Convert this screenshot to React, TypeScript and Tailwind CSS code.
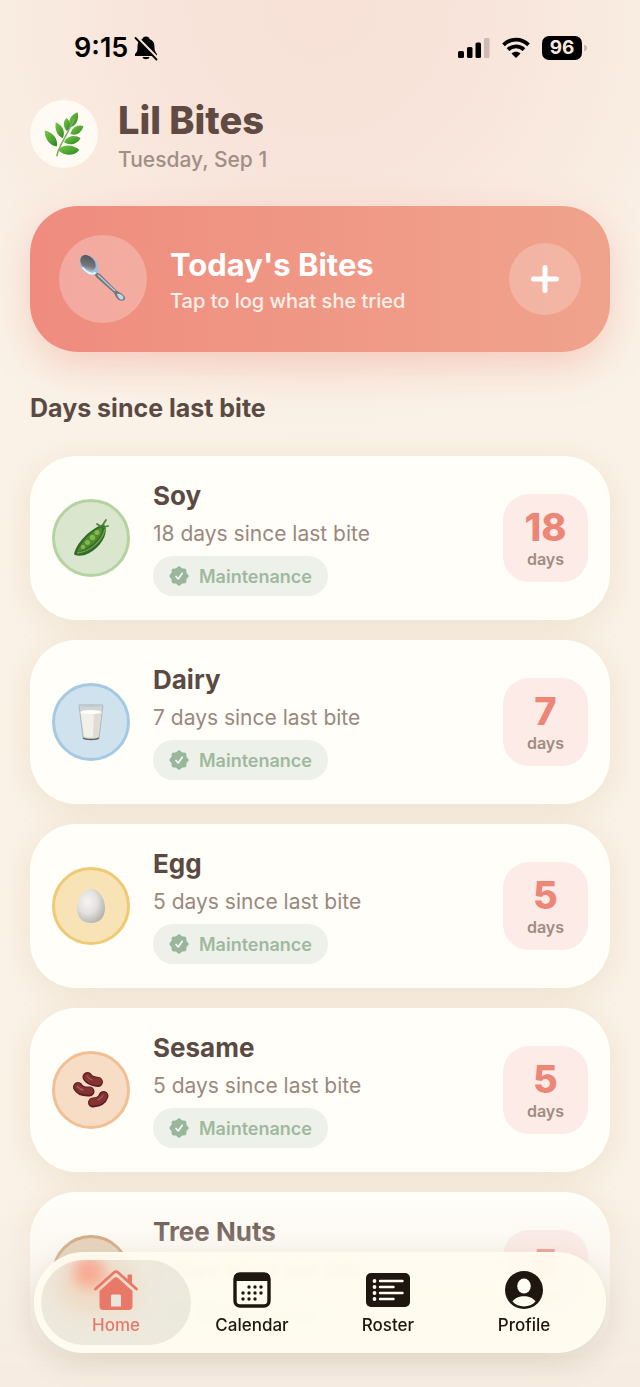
import type { ReactNode } from 'react';

interface Food {
  name: string;
  days: number;
  ring: string;
  icon: ReactNode;
}

function HerbIcon() {
  const leaves = [
    'M54 66C42 65 34 55 33 39C47 42 56 52 54 66Z',
    'M64 52C54 48 50 37 52 25C63 30 69 40 64 52Z',
    'M71 40C64 33 64 24 70 18C78 24 79 34 71 40Z',
    'M77 34C72 24 76 13 89 8C92 20 87 30 77 34Z',
    'M77 45C79 34 90 28 99 32C95 44 86 49 77 45Z',
    'M66 59C70 48 85 45 94 52C88 63 75 65 66 59Z',
    'M56 72C65 61 83 63 92 72C83 83 67 83 56 72Z',
  ];
  return (
    <svg viewBox="32 6 68 78" className="h-[46px] w-[42px]" aria-hidden="true">
      <defs>
        <linearGradient id="leaf" x1="0" y1="0" x2="1" y2="1">
          <stop offset="0" stopColor="#78cc45" />
          <stop offset="1" stopColor="#2f8527" />
        </linearGradient>
      </defs>
      {leaves.map(d => (
        <path key={d} d={d} fill="url(#leaf)" />
      ))}
      <path d="M54 82C56 66 69 52 83 20" fill="none" stroke="#7fae5e" strokeWidth="2.6" strokeLinecap="round" />
    </svg>
  );
}

function SpoonIcon() {
  return (
    <svg viewBox="0 0 48 48" className="size-12" aria-hidden="true">
      <defs>
        <linearGradient id="steel" x1="0" y1="0" x2="1" y2="1">
          <stop offset="0" stopColor="#4a4b50" />
          <stop offset="0.65" stopColor="#77797f" />
          <stop offset="1" stopColor="#c9e2f3" />
        </linearGradient>
      </defs>
      <path d="M14 16L21 19L38 36C42 38 47 41 46 44C44 47 39 46 37 42L35 38L17 22Z" fill="#74777e" />
      <path d="M19 20L36 36" stroke="#b9d0e0" strokeWidth="1.2" />
      <path d="M38 39C42 38 46 42 44 44C42 46 39 43 38 39Z" fill="#bed7ee" />
      <ellipse cx="10" cy="10" rx="11.500" ry="8" transform="rotate(50 10 10)" fill="#9dc0dc" />
      <ellipse cx="9" cy="8" rx="9" ry="6.500" transform="rotate(48 9 8)" fill="url(#steel)" />
      <path d="M4 13C7 17 12 20 16 18" fill="none" stroke="#e6f3fb" strokeWidth="2" strokeLinecap="round" />
    </svg>
  );
}

function PeaIcon() {
  return (
    <svg viewBox="0 0 36 38" className="h-[38px] w-9" aria-hidden="true">
      <path d="M1 35C3 25 16 10 31 5C37 14 27 30 12 36C7 37 2 37 1 35Z" fill="#33692a" />
      <path d="M4 33C8 23 18 12 29 8C31 16 19 29 4 33Z" fill="#4f8a33" />
      <g fill="#83b948">
        <circle cx="10" cy="28" r="2.200" />
        <circle cx="14.500" cy="23.500" r="2.500" />
        <circle cx="19.500" cy="18.500" r="2.700" />
        <circle cx="24" cy="13.500" r="2.500" />
      </g>
      <path d="M4 34C16 33 29 23 32 10" fill="none" stroke="#65a043" strokeWidth="1.600" />
      <path d="M27 7L24 5M29 7L33 1M31 8L35 7" stroke="#4f8636" strokeWidth="1.800" strokeLinecap="round" />
    </svg>
  );
}

function MilkIcon() {
  return (
    <svg viewBox="0 0 28 38" className="h-[38px] w-7" aria-hidden="true">
      <path d="M2 2L6 35C7 37 21 37 22 35L26 2Z" fill="#cfd6d8" stroke="#a7afb2" strokeWidth="0.800" />
      <path d="M3.500 9L7 33C9 35 19 35 21 33L24.500 9Z" fill="#f3efe9" />
      <path d="M17 10L16 34C18 34 20 34 21 33L24.500 9Z" fill="#e0dbd3" />
      <ellipse cx="14" cy="9" rx="10.500" ry="2" fill="#fffdf8" />
      <ellipse cx="14" cy="2.500" rx="12" ry="1.500" fill="#bfc8cb" />
      <path d="M6 35C9 37 19 37 22 35" fill="none" stroke="#5d6164" strokeWidth="1.400" />
    </svg>
  );
}

function EggIcon() {
  return (
    <svg viewBox="0 0 30 38" className="h-[38px] w-[30px]" aria-hidden="true">
      <defs>
        <radialGradient id="egg" cx="0.38" cy="0.38" r="0.7">
          <stop offset="0" stopColor="#f6f5f4" />
          <stop offset="0.5" stopColor="#e2e1df" />
          <stop offset="1" stopColor="#b1aeaa" />
        </radialGradient>
      </defs>
      <path d="M15 2C22 2 29 11 29 21C29 31 23 36 15 36C7 36 1 31 1 21C1 11 8 2 15 2Z" fill="url(#egg)" />
    </svg>
  );
}

function BeansIcon() {
  return (
    <svg viewBox="0 0 38 38" className="size-[38px]" aria-hidden="true">
      <g fill="none" strokeLinecap="round" strokeLinejoin="round">
        <g stroke="#5c1c20" strokeWidth="10">
          <path d="M15.500 6Q17.500 10 26 11" />
          <path d="M6 16Q8.500 21 17.500 20.500" />
          <path d="M31.500 25Q29.500 31 21 31.500" />
        </g>
        <g stroke="#843232" strokeWidth="7.500">
          <path d="M15.500 6Q17.500 10 26 10.500" />
          <path d="M6 16Q8.500 20.500 17.500 20" />
          <path d="M31.500 25Q29.500 30.500 21 31" />
        </g>
        <g stroke="#a9605c" strokeWidth="1.300">
          <path d="M15 5Q17 8 20 9" />
          <path d="M5.500 15.500Q8 18.500 11 19" />
          <path d="M31 24.500Q29 27.500 26 29" />
        </g>
      </g>
    </svg>
  );
}

function ChestnutIcon() {
  return (
    <svg viewBox="0 0 36 38" className="h-[38px] w-9" aria-hidden="true">
      <path d="M18 3C22 8 34 10 34 22C34 32 26 35 18 35C10 35 2 32 2 22C2 10 14 8 18 3Z" fill="#e0593f" />
      <path d="M4 26C10 22 26 22 32 26C30 33 24 35 18 35C12 35 6 33 4 26Z" fill="#e9a27c" />
    </svg>
  );
}

function VerifiedIcon() {
  return (
    <svg viewBox="0 0 20 20" className="size-5" aria-hidden="true">
      <g fill="#9ab69c">
        <rect x="2.600" y="2.600" width="14.800" height="14.800" rx="2.200" />
        <rect x="2.600" y="2.600" width="14.800" height="14.800" rx="2.200" transform="rotate(45 10 10)" />
      </g>
      <path d="M7 10.500L9.200 13L13.200 7.300" fill="none" stroke="#f4f7f0" strokeWidth="1.700" strokeLinecap="round" strokeLinejoin="round" />
    </svg>
  );
}

function StatusBar() {
  return (
    <div className="flex h-24 items-center justify-between pr-[53px] pl-[74px] text-black">
      <div className="flex items-center gap-1.5">
        <span className="text-[27px] leading-8 font-semibold">9:15</span>
        <svg viewBox="0 0 24 26" className="h-[26px] w-6" aria-label="Silent mode">
          <path d="M12 1.500C14 1.500 15.500 2.500 15.500 4C19.500 5.500 20.500 8.500 20.500 12C20.500 16 21.500 17 23 19V21H1V19C3 17 3.500 16 3.500 12C3.500 8.500 4.500 5.500 8.500 4C8.500 2.500 10 1.500 12 1.500Z" />
          <path d="M8.500 22H15.500C15 25 9 25 8.500 22Z" />
          <path d="M2 1.500L24.500 24" stroke="#f9e5da" strokeWidth="3" />
          <path d="M1.500 3L22.500 24.500" stroke="#000" strokeWidth="1.800" strokeLinecap="round" />
        </svg>
      </div>
      <div className="flex items-center gap-3">
        <svg viewBox="0 0 32 22" className="h-[22px] w-8" aria-label="Signal">
          <rect x="0" y="14" width="6" height="7" rx="1.500" />
          <rect x="9" y="10" width="5.500" height="11" rx="1.500" />
          <rect x="17.500" y="5.500" width="5.500" height="15.500" rx="1.500" />
          <rect x="26" y="1" width="5.500" height="20" rx="1.500" fill="#cdbab3" />
        </svg>
        <svg viewBox="0 0 28 22" className="h-[22px] w-7" aria-label="Wi-Fi">
          <g fill="none" stroke="#000" strokeWidth="3.800">
            <path d="M1.500 7.800C8.500 0.800 19.500 0.800 26.500 7.800" />
            <path d="M6 12.600C10.500 8.300 17.500 8.300 22 12.600" />
          </g>
          <path d="M9.500 16.500C12 14 16 14 18.500 16.500L14 21Z" />
        </svg>
        <div className="flex items-center gap-0.5">
          <span className="flex h-6 w-10 items-center justify-center rounded-[7px] bg-black text-[19px] font-bold text-[#f9e8de]">
            96
          </span>
          <span className="h-1.5 w-[3px] rounded-r-full bg-[#cdbab3]" />
        </div>
      </div>
    </div>
  );
}

function FoodCard({ name, days, ring, icon }: Food) {
  return (
    <li className="flex h-[164px] items-center rounded-[46px] bg-[#fffef9] px-[22px] shadow-[0_6px_32px_rgba(196,160,110,0.2)]">
      <div className={`flex size-[78px] shrink-0 items-center justify-center rounded-full border-[3px] ${ring}`}>
        {icon}
      </div>
      <div className="ml-[23px] flex flex-1 flex-col items-start">
        <h3 className="text-[26px] leading-8 font-bold text-[#5b4a43]">{name}</h3>
        <p className="mt-2 text-[21px] leading-7 text-[#9a887e]">{days} days since last bite</p>
        <span className="mt-2 flex h-10 items-center gap-2.5 rounded-full bg-[#eef1e9] px-4 text-[18px] font-semibold text-[#9fb99f]">
          <VerifiedIcon />
          Maintenance
        </span>
      </div>
      <div className="flex h-[88px] w-[85px] shrink-0 flex-col items-center justify-center rounded-[26px] bg-[#fdebe7] pt-1">
        <span className="text-[38px] leading-9 font-extrabold text-[#ec8677]">{days}</span>
        <span className="mt-0.5 text-base font-semibold text-[#a08c83]">days</span>
      </div>
    </li>
  );
}

const FOODS: Food[] = [
  { name: 'Soy', days: 18, ring: 'border-[#b4d3a0] bg-[#dae6ce]', icon: <PeaIcon /> },
  { name: 'Dairy', days: 7, ring: 'border-[#a4cae3] bg-[#d0e2ed]', icon: <MilkIcon /> },
  { name: 'Egg', days: 5, ring: 'border-[#efca72] bg-[#f7e3b5]', icon: <EggIcon /> },
  { name: 'Sesame', days: 5, ring: 'border-[#f0bf94] bg-[#f8ddc6]', icon: <BeansIcon /> },
  { name: 'Tree Nuts', days: 5, ring: 'border-[#c99a6b] bg-[#e3cbb0]', icon: <ChestnutIcon /> },
];

function HomeIcon() {
  return (
    <svg viewBox="0 0 46 42" className="h-[42px] w-[46px]" aria-hidden="true">
      <path d="M34.500 6.500Q34.500 5.500 35.500 5.500H38Q39 5.500 39 6.500V17L34.500 13Z" fill="currentColor" />
      <path d="M2.500 20L21 3.500Q23 1.800 25 3.500L43.500 20" fill="none" stroke="currentColor" strokeWidth="2.800" strokeLinecap="round" strokeLinejoin="round" />
      <path d="M21.500 8.500Q23 7.300 24.500 8.500L39.500 22V37Q39.500 41 35.500 41H10.500Q6.500 41 6.500 37V22Z" fill="currentColor" />
      <path d="M18 27Q18 25.500 19.500 25.500H26.500Q28 25.500 28 27V37.500H18Z" fill="#eae6da" />
    </svg>
  );
}

function CalendarIcon() {
  const dots = [[15, 14], [21, 14], [27, 14], [9, 20], [15, 20], [21, 20], [27, 20], [9, 26], [15, 26], [21, 26]];
  return (
    <svg viewBox="0 0 38 36" className="h-9 w-[38px]" aria-hidden="true">
      <rect x="2" y="2" width="34" height="32" rx="5" fill="none" stroke="currentColor" strokeWidth="3.400" />
      <path d="M1 9V6Q1 1 6 1H32Q37 1 37 6V9Z" fill="currentColor" />
      {dots.map(([x, y]) => (
        <circle key={`${x}-${y}`} cx={x + 1} cy={y + 1} r="1.700" fill="currentColor" />
      ))}
    </svg>
  );
}

function RosterIcon() {
  return (
    <svg viewBox="0 0 44 36" className="h-9 w-11" aria-hidden="true">
      <rect x="0" y="1" width="44" height="34" rx="5" fill="currentColor" />
      <g fill="#fffcf2">
        <circle cx="8.500" cy="9" r="1.900" />
        <circle cx="8.500" cy="15" r="1.900" />
        <circle cx="8.500" cy="21" r="1.900" />
        <circle cx="8.500" cy="27" r="1.900" />
      </g>
      <path d="M14 9H36.500M14 15H27.500M14 21H36.500M14 27H27.500" stroke="#fffcf2" strokeWidth="2.400" strokeLinecap="round" />
    </svg>
  );
}

function ProfileIcon() {
  return (
    <svg viewBox="0 0 38 38" className="size-[38px]" aria-hidden="true">
      <circle cx="19" cy="19" r="19" fill="currentColor" />
      <ellipse cx="19" cy="15" rx="6.800" ry="7.500" fill="#fffcf2" />
      <path d="M7.500 30.500C12 23.500 26 23.500 30.500 30.500C24.500 37 13.500 37 7.500 30.500Z" fill="#fffcf2" />
    </svg>
  );
}

const TABS = [
  { label: 'Home', icon: <HomeIcon />, active: true },
  { label: 'Calendar', icon: <CalendarIcon />, active: false },
  { label: 'Roster', icon: <RosterIcon />, active: false },
  { label: 'Profile', icon: <ProfileIcon />, active: false },
];

function TabBar() {
  return (
    <nav className="fixed inset-x-[34px] bottom-[34px] flex h-[101px] rounded-full border-2 border-[#fffcee] bg-[#fffcf0]/90 px-3 shadow-[0_10px_30px_rgba(120,90,70,0.16)] backdrop-blur-[3px]">
      {TABS.map(({ label, icon, active }) => (
        <a
          key={label}
          href="#"
          aria-current={active ? 'page' : undefined}
          className={`relative flex flex-1 flex-col items-center justify-center ${active ? 'text-[#e87868]' : 'text-[#1f170f]'}`}
        >
          {active && (
            <span className="absolute -inset-x-[7px] inset-y-1.5 overflow-hidden rounded-full bg-[#8d8d80]/16">
              {/* glow of the card icon scrolled under the glass */}
              <span className="absolute top-1 left-4 h-12 w-20 rounded-full bg-[#f5c9a6]/45 blur-md" />
              <span className="absolute -top-1 left-8 size-8 rounded-full bg-[#ff8a73]/60 blur-[7px]" />
            </span>
          )}
          <span className="relative flex h-[42px] items-center">{icon}</span>
          <span className="relative mt-0.5 text-[17px] leading-6 font-medium">{label}</span>
        </a>
      ))}
    </nav>
  );
}

export default function App() {
  return (
    <div className="min-h-screen bg-[#faf2e7] bg-[radial-gradient(ellipse_420px_440px_at_50%_0,#f8e2d8,#f8e4da_40%,#faf2e700)] font-['Inter','Liberation_Sans',sans-serif]">
      <StatusBar />
      <main className="px-[30px] pb-8">
        <header className="flex h-[76px] items-center gap-5">
          <div className="flex size-[68px] items-center justify-center rounded-full bg-[#fffaf3]">
            <HerbIcon />
          </div>
          <div className="pt-1.5">
            <h1 className="text-[38px] leading-10 font-extrabold text-[#5f4b43]">Lil Bites</h1>
            <p className="mt-1.5 text-[21px] leading-7 font-medium text-[#a08f85]">Tuesday, Sep 1</p>
          </div>
        </header>

        <button
          type="button"
          className="mt-[34px] flex h-[146px] w-full items-center rounded-[48px] bg-linear-to-r from-[#ef8c7f] to-[#f0a38c] px-[29px] text-left text-white shadow-[0_14px_38px_rgba(239,140,125,0.36)]"
        >
          <span className="flex size-[88px] shrink-0 items-center justify-center rounded-full bg-white/25">
            <SpoonIcon />
          </span>
          <span className="ml-[23px] flex flex-1 flex-col pt-1">
            <span className="text-[31px] leading-10 font-bold">Today's Bites</span>
            <span className="text-xl leading-8 font-medium text-[#fff0e9]">Tap to log what she tried</span>
          </span>
          <span className="flex size-[72px] shrink-0 items-center justify-center rounded-full bg-white/22">
            <svg viewBox="0 0 28 28" className="size-7" aria-hidden="true">
              <path d="M14 2.500V25.500M2.500 14H25.500" stroke="#fff" strokeWidth="5" strokeLinecap="round" />
            </svg>
          </span>
        </button>

        <h2 className="mt-10 text-[25px] leading-8 font-bold text-[#5b4a43]">Days since last bite</h2>

        <ul className="mt-8 flex flex-col gap-5">
          {FOODS.map(food => (
            <FoodCard key={food.name} {...food} />
          ))}
        </ul>
      </main>
      <div className="pointer-events-none fixed inset-x-0 bottom-0 h-[190px] bg-linear-to-b from-[#f5eadf]/0 via-[#f5ece3]/65 via-55% to-[#f6ece1]" />
      <TabBar />
    </div>
  );
}
